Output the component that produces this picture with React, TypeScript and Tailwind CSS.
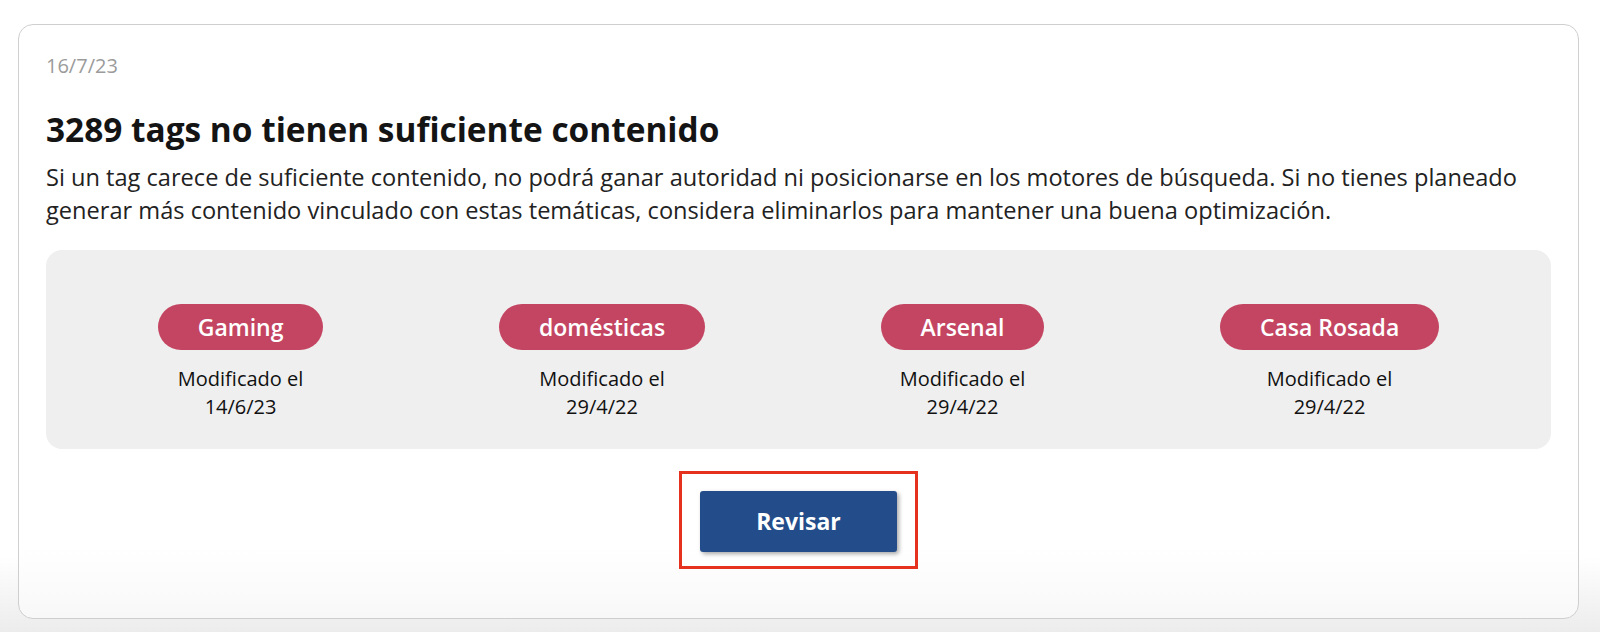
import React from 'react';

const tags = [
  { name: 'Gaming', date: '14/6/23' },
  { name: 'domésticas', date: '29/4/22' },
  { name: 'Arsenal', date: '29/4/22' },
  { name: 'Casa Rosada', date: '29/4/22' },
];

const App = () => {
  return (
    <div className="min-h-[632px] w-[1600px] bg-[linear-gradient(to_bottom,#ffffff_88%,#ececec)] pl-[18px] pr-[21px] pt-[24px] font-['Open_Sans',sans-serif]">
      {/* Card */}
      <div className="rounded-[15px] border border-[#cfcfcf] bg-[linear-gradient(to_bottom,#ffffff_88%,#f8f8f8)] px-[27px] pt-[27px] pb-[49px]">
        <div className="text-[20px] font-medium leading-[28px] text-[#9b9b9b]">16/7/23</div>

        <h1 className="mt-[27px] text-[33.4px] font-bold leading-[44px] text-[#141414]">
          3289 tags no tienen suficiente contenido
        </h1>
        <p className="mt-[10px] text-[23.6px] leading-[33px] text-[#222]">
          Si un tag carece de suficiente contenido, no podrá ganar autoridad ni posicionarse en los motores de búsqueda. Si no tienes planeado
          <br />
          generar más contenido vinculado con estas temáticas, considera eliminarlos para mantener una buena optimización.
        </p>

        {/* Tags box */}
        <div className="mt-[23px] flex justify-around rounded-[16px] bg-[#efefef] px-6 pt-[54px] pb-[28px]">
          {tags.map((tag) => (
            <div key={tag.name} className="flex flex-col items-center">
              <span className="flex h-[46px] items-center rounded-full bg-[#c44562] px-[40px] text-[23px] font-semibold text-white">
                {tag.name}
              </span>
              <div className="mt-[15px] text-center text-[20px] leading-[28px] text-[#111]">
                Modificado el
                <br />
                {tag.date}
              </div>
            </div>
          ))}
        </div>

        {/* Button */}
        <div className="mt-[22px] flex justify-center">
          <div className="border-[3px] border-[#e5321f] px-[18px] pt-[17px] pb-[14px]">
            <button className="h-[61px] w-[197px] rounded-[3px] bg-[#234d8a] text-[23px] font-bold text-white shadow-[2px_2px_4px_rgba(0,0,0,0.35)]">
              Revisar
            </button>
          </div>
        </div>
      </div>
    </div>
  );
};

export default App;
